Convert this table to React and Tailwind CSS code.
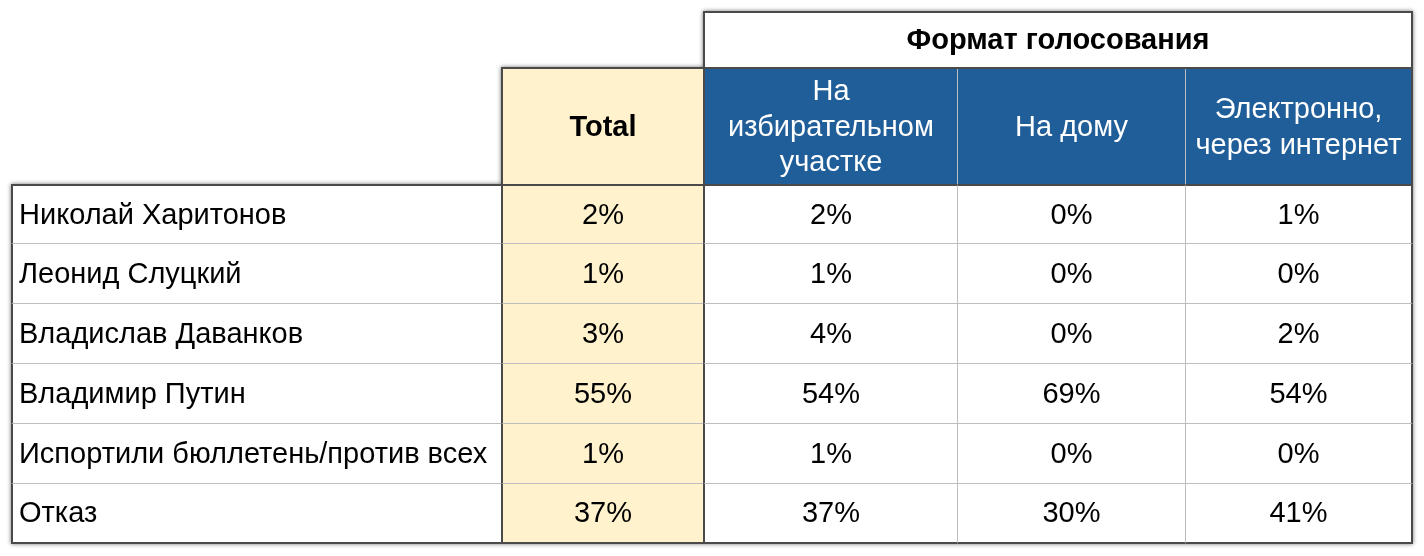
import React from 'react'

const rows = [
    ["Николай Харитонов", "2%", "2%", "0%", "1%"],
    ["Леонид Слуцкий", "1%", "1%", "0%", "0%"],
    ["Владислав Даванков", "3%", "4%", "0%", "2%"],
    ["Владимир Путин", "55%", "54%", "69%", "54%"],
    ["Испортили бюллетень/против всех", "1%", "1%", "0%", "0%"],
    ["Отказ", "37%", "37%", "30%", "41%"],
]

const App = () => {
    return (
        <div className="w-[1424px] h-[556px] bg-white pl-[11px] pt-[11px] font-['Liberation_Sans',Arial,sans-serif] text-[29px] text-black">
            <div className="grid grid-cols-[490px_202px_254px_228px_228px] grid-rows-[56px_117px_repeat(6,60px)] w-fit drop-shadow-[0_0_2px_rgba(0,0,0,0.55)]">
                <div className="col-span-2"></div>
                <div className="col-span-3 bg-white border-t-2 border-l-2 border-r-2 border-[#4a4a4a] flex items-center justify-center font-bold">
                    Формат голосования
                </div>

                <div></div>
                <div className="bg-[#fff2cc] border-t-2 border-l-2 border-[#4a4a4a] flex items-center justify-center font-bold">Total</div>
                <div className="bg-[#205e99] border-t-2 border-l-2 border-[#4a4a4a] flex items-center justify-center text-center text-white leading-[35.5px]">
                    На<br />избирательном<br />участке
                </div>
                <div className="bg-[#205e99] border-t-2 border-[#4a4a4a] flex">
                    <div className="w-px bg-[#bdbdbd]"></div>
                    <div className="flex-1 flex items-center justify-center text-white">На дому</div>
                </div>
                <div className="bg-[#205e99] border-t-2 border-r-2 border-[#4a4a4a] flex">
                    <div className="w-px bg-[#bdbdbd]"></div>
                    <div className="flex-1 flex items-center justify-center text-center text-white leading-[35.5px]">Электронно,<br />через интернет</div>
                </div>

                {rows.map((row, i) => {
                    const first = i === 0
                    const last = i === rows.length - 1
                    const top = first ? "border-t-2 border-t-[#4a4a4a]" : ""
                    const bottom = last ? "border-b-2 border-b-[#4a4a4a]" : "border-b border-b-[#bdbdbd]"
                    return (
                        <React.Fragment key={i}>
                            <div className={`bg-white border-l-2 border-l-[#4a4a4a] ${top} ${bottom} flex items-center pl-[6px] whitespace-nowrap`}>{row[0]}</div>
                            <div className={`bg-[#fff2cc] border-l-2 border-l-[#4a4a4a] ${top} ${bottom} flex items-center justify-center`}>{row[1]}</div>
                            <div className={`bg-white border-l-2 border-l-[#4a4a4a] ${top} ${bottom} flex items-center justify-center`}>{row[2]}</div>
                            <div className={`bg-white border-l border-l-[#bdbdbd] ${top} ${bottom} flex items-center justify-center`}>{row[3]}</div>
                            <div className={`bg-white border-l border-l-[#bdbdbd] border-r-2 border-r-[#4a4a4a] ${top} ${bottom} flex items-center justify-center`}>{row[4]}</div>
                        </React.Fragment>
                    )
                })}
            </div>
        </div>
    )
}

export default App
